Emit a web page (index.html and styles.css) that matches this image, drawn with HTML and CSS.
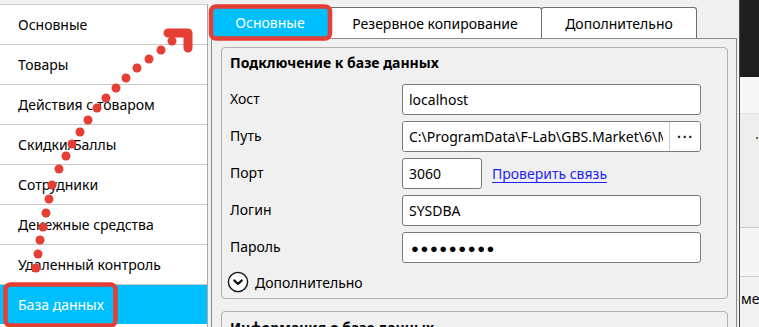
FILE: index.html
```html
<!DOCTYPE html>
<html lang="ru">
<head>
  <meta charset="UTF-8">
  <meta name="viewport" content="width=device-width, initial-scale=1.0">
  <title>Настройки</title>
  <link rel="stylesheet" href="styles.css">
</head>
<body>

  <div class="window">
    <!-- Sections list -->
    <nav class="sidebar">
      <div class="nav-item">Основные</div>
      <div class="nav-item">Товары</div>
      <div class="nav-item">Действия с товаром</div>
      <div class="nav-item">Скидки/Баллы</div>
      <div class="nav-item">Сотрудники</div>
      <div class="nav-item">Денежные средства</div>
      <div class="nav-item">Удаленный контроль</div>
      <div class="nav-item selected">База данных</div>
    </nav>

    <main class="settings">
      <div class="tabs">
        <div class="tab active">Основные</div>
        <div class="tab tab-backup">Резервное копирование</div>
        <div class="tab tab-extra">Дополнительно</div>
      </div>

      <div class="tab-panel">
        <section class="group">
          <h3 class="group-title">Подключение к базе данных</h3>

          <div class="form-grid">
            <label for="host">Хост</label>
            <input class="field" type="text" id="host" value="localhost" readonly>

            <label for="path">Путь</label>
            <div class="path-field">
              <input type="text" id="path" value="C:\ProgramData\F-Lab\GBS.Market\6\MARKET.FDB" readonly>
              <button type="button" class="browse">···</button>
            </div>

            <label for="port">Порт</label>
            <div class="port-row">
              <input class="field port" type="text" id="port" value="3060" readonly>
              <a href="#" class="check-link">Проверить связь</a>
            </div>

            <label for="login">Логин</label>
            <input class="field" type="text" id="login" value="SYSDBA" readonly>

            <label for="password">Пароль</label>
            <div class="field password">●●●●●●●●●</div>
          </div>

          <div class="expander">
            <svg width="22" height="22" viewBox="0 0 22 22">
              <circle cx="11" cy="11" r="9.6" fill="#fff" stroke="#111" stroke-width="1.4"/>
              <path d="M7.2 9.4 L11 13 L14.8 9.4" fill="none" stroke="#111" stroke-width="2.2" stroke-linecap="round" stroke-linejoin="round"/>
            </svg>
            <span>Дополнительно</span>
          </div>
        </section>

        <section class="group next-group">
          <h3 class="group-title">Информация о базе данных</h3>
        </section>
      </div>
    </main>

    <!-- Window behind -->
    <aside class="behind">
      <div class="behind-dark"></div>
      <div class="behind-light"></div>
      <div class="behind-mid"><span class="speck"></span></div>
      <div class="behind-row"></div>
      <div class="behind-text">меню</div>
    </aside>
  </div>

  <!-- Red annotation -->
  <svg class="annotation" width="759" height="327" viewBox="0 0 759 327">
    <g fill="none" stroke="#e53e35" stroke-width="4.5" stroke-linejoin="round">
      <rect x="211" y="6.5" width="119" height="32" rx="5"/>
      <rect x="5.5" y="284.5" width="110" height="41" rx="5"/>
      <path d="M168 33 L188 33 L188 48" stroke-width="9" stroke-linecap="round"/>
    </g>
    <g fill="#e53e35">
      <circle cx="172" cy="41" r="4.5"/>
      <circle cx="161" cy="50" r="4.5"/>
      <circle cx="149" cy="59" r="4.5"/>
      <circle cx="137" cy="68" r="4.5"/>
      <circle cx="126" cy="78" r="4.5"/>
      <circle cx="116" cy="88" r="4.5"/>
      <circle cx="106" cy="98" r="4.5"/>
      <circle cx="97" cy="108" r="4.5"/>
      <circle cx="88" cy="120" r="4.5"/>
      <circle cx="80" cy="132" r="4.5"/>
      <circle cx="72" cy="144" r="4.5"/>
      <circle cx="66" cy="156" r="4.5"/>
      <circle cx="59" cy="169" r="4.5"/>
      <circle cx="52" cy="185" r="4.5"/>
      <circle cx="49" cy="199" r="4.5"/>
      <circle cx="46" cy="213" r="4.5"/>
      <circle cx="43" cy="227" r="4.5"/>
      <circle cx="40" cy="240" r="4.5"/>
      <circle cx="38" cy="254" r="4.5"/>
      <circle cx="36" cy="268" r="4.5"/>
    </g>
  </svg>

</body>
</html>
```

FILE: styles.css
```css
/* General */
body {
  margin: 0;
  width: 759px;
  height: 327px;
  overflow: hidden;
  position: relative;
  background: #f0f0f0;
  font-family: "Noto Sans", "Open Sans", sans-serif;
  font-size: 14px;
  color: #000;
}

.window {
  display: flex;
  height: 327px;
}

/* Sidebar */
.sidebar {
  width: 207px;
  margin-top: 4px;
  background: #fff;
  border-top: 1px solid #cfcfcf;
  border-right: 1px solid #a8a8a8;
  flex-shrink: 0;
}
.nav-item {
  height: 39px;
  padding-left: 18px;
  display: flex;
  align-items: center;
  border-bottom: 1px solid #c9c9c9;
}
.nav-item.selected {
  background: #00bfff;
  color: #fff;
  border-bottom: none;
}

/* Main area */
.settings {
  width: 526px;
  margin-left: 3px;
  display: flex;
  flex-direction: column;
  flex-shrink: 0;
}

/* Tabs */
.tabs {
  display: flex;
  height: 31px;
  padding-top: 7px;
}
.tab {
  box-sizing: border-box;
  height: 31px;
  display: flex;
  align-items: center;
  justify-content: center;
  background: #fff;
  border: 1px solid #6e6e6e;
  border-bottom: none;
  border-radius: 3px 3px 0 0;
  margin-left: -1px;
}
.tab.active {
  width: 118px;
  height: 33px;
  margin-top: -2px;
  margin-left: 0;
  background: #00bfff;
  border-color: #00bfff;
  color: #fff;
}
.tab-backup {
  width: 214px;
}
.tab-extra {
  width: 156px;
}

.tab-panel {
  flex: 1;
  border: 1px solid #8a8a8a;
  padding: 8px 8px 0 9px;
}

/* Group boxes */
.group {
  border: 1px solid #b2b2b2;
  border-radius: 4px;
  padding: 4px 25px 4px 8px;
}
.group-title {
  margin: 0;
  font-size: 14px;
  font-weight: 700;
  line-height: 21px;
}
.next-group {
  margin-top: 12px;
  padding-top: 5px;
}

/* Form */
.form-grid {
  display: grid;
  grid-template-columns: 172px 299px;
  grid-auto-rows: 31px;
  row-gap: 6px;
  align-items: center;
  margin-top: 11px;
}
.form-grid label {
  padding-bottom: 2px;
}
.field,
.path-field {
  box-sizing: border-box;
  height: 31px;
  background: #fff;
  border: 1px solid #7a7a7a;
  border-radius: 3px;
  font-family: inherit;
  font-size: 14px;
  color: #000;
  padding: 0 6px;
  outline: none;
}
.path-field {
  display: flex;
  padding: 0;
  overflow: hidden;
}
.path-field input {
  flex: 1;
  min-width: 0;
  border: none;
  outline: none;
  padding: 0 6px;
  font-family: inherit;
  font-size: 14px;
  background: #fff;
}
.browse {
  width: 31px;
  border: none;
  border-left: 1px solid #c8c8c8;
  background: #fff;
  font-size: 14px;
  font-weight: 700;
  letter-spacing: 1px;
  padding: 0 0 0 1px;
  color: #111;
}
.port-row {
  display: flex;
  align-items: center;
  height: 31px;
}
.field.port {
  width: 80px;
}
.check-link {
  margin-left: 10px;
  color: #1f1ff5;
  text-decoration: underline;
  text-underline-offset: 3px;
}
.password {
  display: flex;
  align-items: center;
  font-size: 13px;
  letter-spacing: 1.6px;
  padding-left: 8px;
}

.expander {
  display: flex;
  align-items: center;
  gap: 6px;
  height: 24px;
  margin: 7px 0 0 -3px;
}

/* Window behind, on the right */
.behind {
  width: 19px;
  border-left: 1px solid #4b4b4b;
  margin-left: 2px;
  background: #f2f2f2;
  overflow: hidden;
}
.behind-dark {
  height: 77px;
  background: #1f1f1f;
}
.behind-light {
  height: 36px;
  background: #f7f7f7;
}
.behind-mid {
  height: 113px;
  background: #eeeeee;
  border-top: 1px solid #e2e2e2;
  border-bottom: 1px solid #c9c9c9;
  position: relative;
}
.speck {
  position: absolute;
  left: 16px;
  top: 23px;
  width: 2px;
  height: 2px;
  background: #8a5a2a;
}
.behind-row {
  height: 48px;
  background: #f4f4f4;
  border-bottom: 1px solid #cfcfcf;
}
.behind-text {
  padding-top: 12px;
  padding-left: 1px;
  white-space: nowrap;
}

/* Annotation overlay */
.annotation {
  position: absolute;
  top: 0;
  left: 0;
  pointer-events: none;
}
```
